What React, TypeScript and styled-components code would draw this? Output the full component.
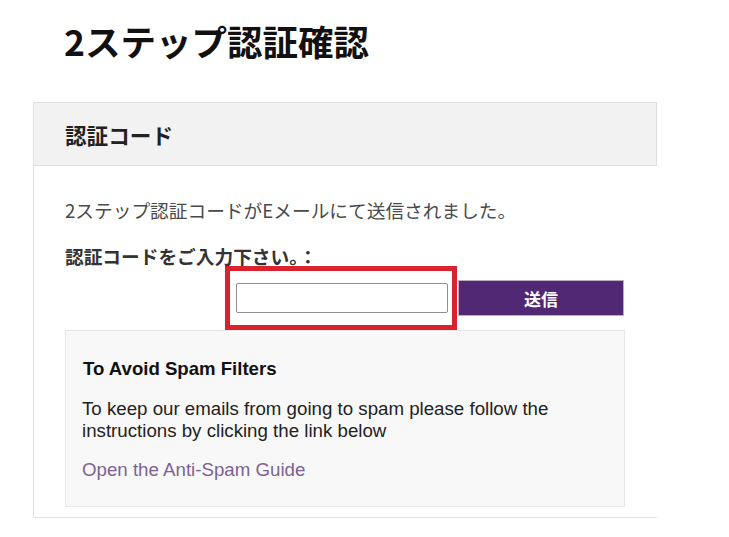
import React from "react";
import styled, { createGlobalStyle } from "styled-components";

const GlobalStyle = createGlobalStyle`
  html, body { margin: 0; padding: 0; background: #ffffff; }
  body { font-family: "Noto Sans CJK JP", "Noto Sans", sans-serif; color: #333; }
  * { box-sizing: border-box; }
`;

const Page = styled.div`
  width: 729px;
  min-height: 537px;
  padding: 0 0 0 33px;
`;

const Title = styled.h1`
  margin: 0;
  padding: 23px 0 0 31px;
  height: 102px;
  font-size: 35.5px;
  line-height: 36px;
  font-weight: 700;
  color: #111;
  font-family: "Noto Sans CJK JP", sans-serif;
`;

const Panel = styled.section`
  width: 624px;
  border-left: 1px solid #e2e2e2;
  border-bottom: 1px solid #e2e2e2;
`;

const PanelHeader = styled.div`
  height: 64px;
  background: #f2f2f2;
  border: 1px solid #dedede;
  border-left: none;
  display: flex;
  align-items: center;
  padding-left: 31px;
  font-size: 21.6px;
  font-weight: 700;
  color: #222;
`;

const PanelBody = styled.div`
  padding: 30px 32px 10px 31px;
`;

const Message = styled.p`
  margin: 0;
  font-size: 18.7px;
  line-height: 28px;
  color: #4a4a4a;
`;

const Label = styled.label`
  display: block;
  margin-top: 22px;
  font-size: 18.7px;
  line-height: 20px;
  font-weight: 700;
  color: #333;
`;

const FormRow = styled.div`
  display: flex;
  justify-content: flex-end;
  align-items: center;
  height: 64px;
  gap: 1px;
  padding-right: 1px;
`;

const Highlight = styled.div`
  width: 232px;
  height: 64px;
  border: 5px solid #d9232d;
  padding: 12px 4px 12px 6px;
`;

const CodeInput = styled.input`
  display: block;
  width: 212px;
  height: 30px;
  border: 1px solid #8f8f8f;
  border-radius: 2px;
  background: #fff;
  padding: 0 6px;
  font-size: 16px;
`;

const SubmitButton = styled.button`
  width: 166px;
  height: 36px;
  background: #512874;
  border: 1px solid #b9aec4;
  color: #fff;
  font-family: "Noto Sans CJK JP", sans-serif;
  font-size: 17px;
  font-weight: 700;
  cursor: pointer;
`;

const SpamBox = styled.div`
  height: 177px;
  background: #f8f8f8;
  border: 1px solid #e8e8e8;
  padding: 27px 17px 0 16px;
  font-family: "Liberation Sans", Arial, sans-serif;
`;

const SpamTitle = styled.h3`
  margin: 0;
  padding-left: 1px;
  font-size: 18.6px;
  line-height: 22px;
  font-weight: 700;
  color: #111;
`;

const SpamText = styled.p`
  margin: 18px 0 0;
  font-size: 18.7px;
  line-height: 22px;
  color: #222;
`;

const SpamLink = styled.a`
  display: block;
  margin-top: 17px;
  font-size: 18.7px;
  line-height: 22px;
  color: #7d6291;
  text-decoration: none;
`;

export default function App() {
  return (
    <>
      <GlobalStyle />
      <Page>
        <Title>2ステップ認証確認</Title>
        <Panel>
          <PanelHeader>認証コード</PanelHeader>
          <PanelBody>
            <Message>2ステップ認証コードがEメールにて送信されました。</Message>
            <Label htmlFor="code">認証コードをご入力下さい。：</Label>
            <FormRow>
              <Highlight>
                <CodeInput id="code" type="text" />
              </Highlight>
              <SubmitButton type="button">送信</SubmitButton>
            </FormRow>
            <SpamBox>
              <SpamTitle>To Avoid Spam Filters</SpamTitle>
              <SpamText>
                To keep our emails from going to spam please follow the
                <br />
                instructions by clicking the link below
              </SpamText>
              <SpamLink href="#">Open the Anti-Spam Guide</SpamLink>
            </SpamBox>
          </PanelBody>
        </Panel>
      </Page>
    </>
  );
}
